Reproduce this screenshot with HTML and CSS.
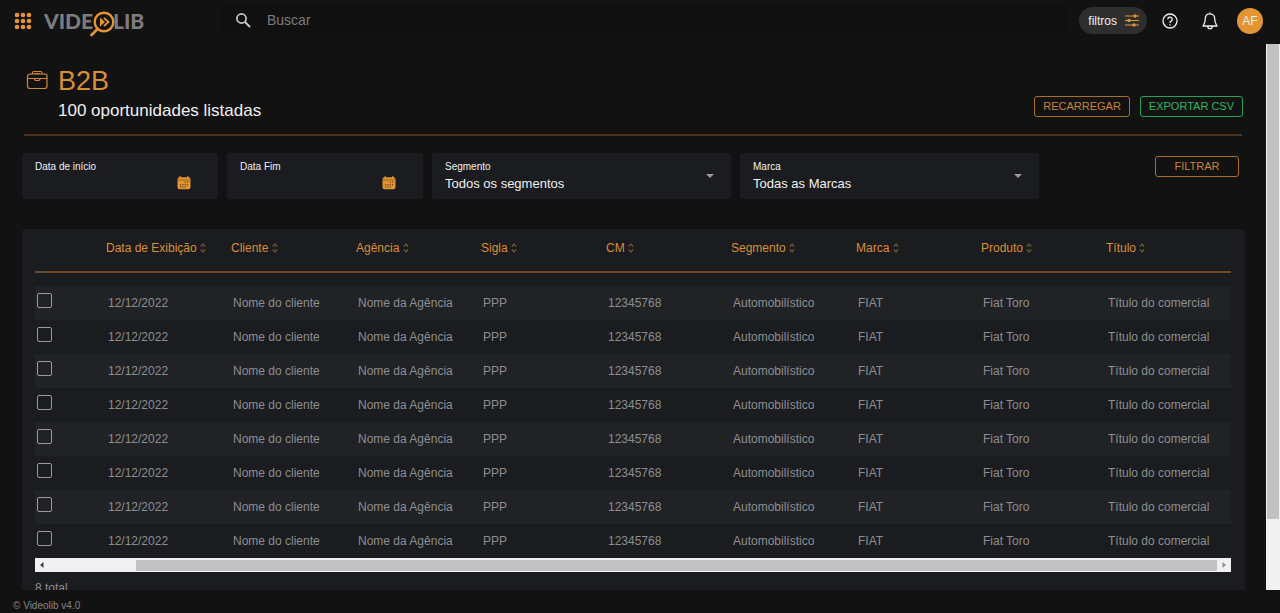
FILE: index.html
```html
<!DOCTYPE html>
<html lang="pt-BR">
<head>
<meta charset="utf-8">
<meta name="viewport" content="width=device-width, initial-scale=1">
<title>Videolib - B2B</title>
<link rel="stylesheet" href="styles.css">
</head>
<body>
<svg class="sprite" aria-hidden="true">
  <symbol id="sort" viewBox="0 0 6 10">
    <path d="M.8 3.500 3 1.200 5.200 3.500M.8 6.500 3 8.800 5.200 6.500" fill="none" stroke="currentColor" stroke-width="1.200"/>
  </symbol>
  <symbol id="calendar" viewBox="0 0 14 14">
    <path fill="#e29532" d="M2.500 1.200h9A2 2 0 0 1 13.500 3.200V11.200A2 2 0 0 1 11.500 13.200h-9A2 2 0 0 1 .5 11.200V3.200A2 2 0 0 1 2.500 1.200zM2.500 .3h1.500v2H2.500zM10 .3h1.500v2H10z"/>
    <path stroke="#8a5c22" stroke-width=".8" d="M.5 4h13"/>
    <path fill="#6b481c" d="M3 8h1.200v1.200H3zM3 10.200h1.200v1.200H3zM5.300 8h1.200v1.200H5.300zM5.300 10.200h1.200v1.200H5.300zM7.600 5.500h1.200v1.200H7.600zM7.600 8h1.200v1.200H7.600zM7.600 10.200h1.200v1.200H7.600zM9.900 5.500h1.200v1.200H9.900zM9.900 8h1.200v1.200H9.900z"/>
  </symbol>
</svg>

<header class="topbar">
  <button class="icon-btn apps" type="button" aria-label="Aplicativos">
    <svg width="18" height="18" viewBox="0 0 18 18" fill="#e29532">
      <circle cx="3" cy="3" r="2.300"/><circle cx="9" cy="3" r="2.300"/><circle cx="15" cy="3" r="2.300"/>
      <circle cx="3" cy="9" r="2.300"/><circle cx="9" cy="9" r="2.300"/><circle cx="15" cy="9" r="2.300"/>
      <circle cx="3" cy="15" r="2.300"/><circle cx="9" cy="15" r="2.300"/><circle cx="15" cy="15" r="2.300"/>
    </svg>
  </button>
  <a class="logo" href="#" aria-label="Videolib">
    <svg width="102" height="28" viewBox="0 0 102 28">
      <text class="logo-text" x="0" y="20">VIDE</text>
      <text class="logo-text" x="69" y="20">LIB</text>
      <circle cx="60" cy="13" r="9.300" fill="#121212" stroke="#e29532" stroke-width="2.400"/>
      <path d="M53.500 20 47.500 26" stroke="#e29532" stroke-width="2.800" stroke-linecap="round"/>
      <path d="M56 8.500 61 13 56 17.500z" fill="#e29532"/>
      <path d="M60 9 64.500 13 60 17" fill="none" stroke="#e29532" stroke-width="1.800"/>
    </svg>
  </a>
  <form class="search" role="search">
    <svg width="16" height="16" viewBox="0 0 16 16" fill="none" stroke="#c8c8c8" stroke-width="1.700" aria-hidden="true">
      <circle cx="6.500" cy="6.500" r="4.600"/><path d="M10 10 15 15" stroke-width="2"/>
    </svg>
    <input class="search-input" type="search" placeholder="Buscar" aria-label="Buscar">
  </form>
  <div class="actions">
    <button class="filters" type="button">filtros
      <svg width="14" height="13" viewBox="0 0 14 13" fill="none" stroke="#e29532" aria-hidden="true">
        <path d="M0 2h14M0 6.500h14M0 11h14" stroke-width="1.200"/>
        <g fill="#e29532" stroke="none"><circle cx="10" cy="2" r="1.700"/><circle cx="4" cy="6.500" r="1.700"/><circle cx="9" cy="11" r="1.700"/></g>
      </svg>
    </button>
    <button class="icon-btn" type="button" aria-label="Ajuda">
      <svg width="16" height="16" viewBox="0 0 16 16" fill="none" stroke="#f0f0f0" stroke-width="1.300">
        <circle cx="8" cy="8" r="7"/><path d="M5.800 6.300a2.200 2.200 0 1 1 3.400 1.800Q8 8.800 8 10M8 11.200v1.300"/>
      </svg>
    </button>
    <button class="icon-btn" type="button" aria-label="Notificações">
      <svg width="16" height="18" viewBox="0 0 16 18" fill="none" stroke="#f0f0f0" stroke-width="1.300" stroke-linejoin="round">
        <path d="M8 .500V2M8 1.800c-3 0-4.700 2.200-4.700 5 0 4.200-1 5.200-2.300 7.200h14c-1.300-2-2.300-3-2.300-7.200 0-2.800-1.700-5-4.700-5zM5.800 14.300a2.200 2.600 0 0 0 4.400 0"/>
      </svg>
    </button>
    <button class="avatar" type="button" aria-label="AF, conta">AF</button>
  </div>
</header>

<div class="viewport">
  <main class="content">
    <section class="heading">
      <svg class="heading-icon" width="22" height="20" viewBox="0 0 22 20" fill="none" stroke="#d08a35" stroke-width="1.200" aria-hidden="true">
        <rect x="1.500" y="4" width="19.500" height="14.500" rx="2.500"/>
        <path d="M6.500 4V2.800Q6.500 1.500 7.800 1.500h6.900q1.300 0 1.300 1.300V4M8.500 3.500h5.500M1.500 8.500h19.500M8.500 8.800q0 1.700 1.500 1.700h2.500q1.500 0 1.500-1.700"/>
      </svg>
      <div class="heading-text">
        <h1 class="title">B2B</h1>
        <p class="subtitle">100 oportunidades listadas</p>
      </div>
      <div class="heading-actions">
        <button class="btn" type="button">RECARREGAR</button>
        <button class="btn btn-green" type="button">EXPORTAR CSV</button>
      </div>
    </section>

    <form class="filter-bar">
      <div class="field field-date">
        <label class="field-label" for="start">Data de início</label>
        <div class="date-row">
          <input class="date-input" id="start" type="text">
          <button class="icon-btn" type="button" aria-label="Abrir calendário de início"><svg width="14" height="14"><use href="#calendar"/></svg></button>
        </div>
      </div>
      <div class="field field-date">
        <label class="field-label" for="end">Data Fim</label>
        <div class="date-row">
          <input class="date-input" id="end" type="text">
          <button class="icon-btn" type="button" aria-label="Abrir calendário de fim"><svg width="14" height="14"><use href="#calendar"/></svg></button>
        </div>
      </div>
      <div class="field field-select">
        <div class="select-col">
          <label class="field-label" for="segment">Segmento</label>
          <select class="select" id="segment"><option>Todos os segmentos</option></select>
        </div>
        <span class="caret"></span>
      </div>
      <div class="field field-select">
        <div class="select-col">
          <label class="field-label" for="brand">Marca</label>
          <select class="select" id="brand"><option>Todas as Marcas</option></select>
        </div>
        <span class="caret"></span>
      </div>
      <button class="btn btn-filter" type="button">FILTRAR</button>
    </form>

    <section class="panel">
      <table class="grid">
        <thead>
          <tr>
            <th class="check-col"></th>
            <th>Data de Exibição <svg class="sort"><use href="#sort"/></svg></th>
            <th>Cliente <svg class="sort"><use href="#sort"/></svg></th>
            <th>Agência <svg class="sort"><use href="#sort"/></svg></th>
            <th>Sigla <svg class="sort"><use href="#sort"/></svg></th>
            <th>CM <svg class="sort"><use href="#sort"/></svg></th>
            <th>Segmento <svg class="sort"><use href="#sort"/></svg></th>
            <th>Marca <svg class="sort"><use href="#sort"/></svg></th>
            <th>Produto <svg class="sort"><use href="#sort"/></svg></th>
            <th>Título <svg class="sort"><use href="#sort"/></svg></th>
          </tr>
        </thead>
        <tbody>
          <tr><td><input class="check" type="checkbox" aria-label="Selecionar linha 1"></td><td>12/12/2022</td><td>Nome do cliente</td><td>Nome da Agência</td><td>PPP</td><td>12345768</td><td>Automobilístico</td><td>FIAT</td><td>Fiat Toro</td><td>Título do comercial</td></tr>
          <tr><td><input class="check" type="checkbox" aria-label="Selecionar linha 2"></td><td>12/12/2022</td><td>Nome do cliente</td><td>Nome da Agência</td><td>PPP</td><td>12345768</td><td>Automobilístico</td><td>FIAT</td><td>Fiat Toro</td><td>Título do comercial</td></tr>
          <tr><td><input class="check" type="checkbox" aria-label="Selecionar linha 3"></td><td>12/12/2022</td><td>Nome do cliente</td><td>Nome da Agência</td><td>PPP</td><td>12345768</td><td>Automobilístico</td><td>FIAT</td><td>Fiat Toro</td><td>Título do comercial</td></tr>
          <tr><td><input class="check" type="checkbox" aria-label="Selecionar linha 4"></td><td>12/12/2022</td><td>Nome do cliente</td><td>Nome da Agência</td><td>PPP</td><td>12345768</td><td>Automobilístico</td><td>FIAT</td><td>Fiat Toro</td><td>Título do comercial</td></tr>
          <tr><td><input class="check" type="checkbox" aria-label="Selecionar linha 5"></td><td>12/12/2022</td><td>Nome do cliente</td><td>Nome da Agência</td><td>PPP</td><td>12345768</td><td>Automobilístico</td><td>FIAT</td><td>Fiat Toro</td><td>Título do comercial</td></tr>
          <tr><td><input class="check" type="checkbox" aria-label="Selecionar linha 6"></td><td>12/12/2022</td><td>Nome do cliente</td><td>Nome da Agência</td><td>PPP</td><td>12345768</td><td>Automobilístico</td><td>FIAT</td><td>Fiat Toro</td><td>Título do comercial</td></tr>
          <tr><td><input class="check" type="checkbox" aria-label="Selecionar linha 7"></td><td>12/12/2022</td><td>Nome do cliente</td><td>Nome da Agência</td><td>PPP</td><td>12345768</td><td>Automobilístico</td><td>FIAT</td><td>Fiat Toro</td><td>Título do comercial</td></tr>
          <tr><td><input class="check" type="checkbox" aria-label="Selecionar linha 8"></td><td>12/12/2022</td><td>Nome do cliente</td><td>Nome da Agência</td><td>PPP</td><td>12345768</td><td>Automobilístico</td><td>FIAT</td><td>Fiat Toro</td><td>Título do comercial</td></tr>
        </tbody>
      </table>
      <div class="hscroll" aria-hidden="true">
        <svg width="14" height="10" viewBox="0 0 14 10"><path d="M8.500 2v6L5 5z" fill="#404040"/></svg>
        <div class="hscroll-rest"></div>
        <div class="hscroll-thumb"></div>
        <svg width="14" height="10" viewBox="0 0 14 10"><path d="M5.500 2v6L9 5z" fill="#909090"/></svg>
      </div>
      <p class="total">8 total</p>
    </section>
  </main>
  <div class="vscroll" aria-hidden="true"><div class="vscroll-thumb"></div></div>
</div>

<footer class="footer">© Videolib v4.0</footer>
</body>
</html>
```

FILE: styles.css
```css
* { box-sizing: border-box; }

body {
  margin: 0;
  height: 100vh;
  display: flex;
  flex-direction: column;
  background: #121212;
  color: #f0f0f0;
  font-family: "Liberation Sans", Arial, sans-serif;
  font-size: 12px;
  overflow: hidden;
}

button, input, select { font-family: inherit; color: inherit; }
button { cursor: pointer; }
svg { display: block; flex: none; }

.sprite { position: absolute; width: 0; height: 0; }

.icon-btn {
  display: flex;
  padding: 0;
  border: 0;
  background: none;
}

/* Top bar */
.topbar {
  flex: none;
  display: flex;
  align-items: center;
  height: 44px;
  padding: 0 17px 3px 14px;
  box-shadow: 0 1px 2px #0e0e0e;
}

.logo { margin: 4px 0 0 12px; }

.logo-text {
  font-family: Lato, sans-serif;
  font-size: 21px;
  font-weight: 900;
  fill: #7c7c7c;
}

.search {
  flex: 1;
  display: flex;
  align-items: center;
  gap: 16px;
  height: 34px;
  margin: 0 10px 0 73px;
  padding: 0 0 1px 16px;
  background: #101010;
  border-radius: 3px;
}

.search-input {
  flex: 1;
  min-width: 0;
  padding: 0;
  border: 0;
  outline: 0;
  background: none;
  font-size: 14px;
}

.search-input::placeholder { color: #7c7c7c; }

.actions { display: flex; align-items: center; }
.actions .icon-btn { margin-left: 15px; }
.actions .icon-btn + .icon-btn { margin-left: 24px; }

.filters {
  display: flex;
  align-items: center;
  gap: 8px;
  height: 27px;
  padding: 0 8px 0 9px;
  border: 0;
  border-radius: 14px;
  background: #2e2e2e;
  font-size: 12px;
}

.avatar {
  width: 26px;
  height: 26px;
  margin-left: 19px;
  padding: 0;
  border: 0;
  border-radius: 50%;
  background: #e29532;
  font-size: 12px;
}

/* Scrolling page area */
.viewport { flex: 1; min-height: 0; display: flex; }

.content {
  flex: 1;
  min-width: 0;
  overflow: hidden;
  padding: 22px 21px 0 22px;
}

.vscroll { flex: none; width: 14px; padding: 0 1px; background: #f1f1f1; }
.vscroll-thumb { height: 87%; background: #c1c1c1; }

.heading {
  display: flex;
  align-items: flex-start;
  margin: 0 3px 0 2px;
  padding: 0 0 13px 2px;
  border-bottom: 2px solid #4a321c;
}

.heading-icon { margin-top: 4px; }
.heading-text { flex: 1; margin-left: 10px; }

.title {
  margin: 0;
  color: #d98f33;
  font-size: 27px;
  font-weight: 400;
  line-height: 30px;
}

.subtitle { margin: 5px 0 0; font-size: 17px; line-height: 20px; }

.heading-actions { display: flex; gap: 10px; margin: 30px -1px 0 0; }

.btn {
  height: 21px;
  padding: 0 8px;
  border: 1px solid #a86e2b;
  border-radius: 3px;
  background: none;
  color: #c98432;
  font-size: 11px;
  line-height: 19px;
}

.btn-green { border-color: #25a35a; color: #2bb866; }

/* Filters */
.filter-bar { display: flex; gap: 9px; padding-top: 17px; }

.field {
  display: flex;
  height: 46px;
  padding: 7px 13px;
  border-radius: 3px;
  background: #1b1c1f;
}

.field-date { flex: 0 1 196px; min-width: 0; flex-direction: column; }
.field-select { flex: 0 1 299px; min-width: 0; align-items: center; }
.field-label { display: block; font-size: 10px; line-height: 13px; }

.date-row { display: flex; padding-right: 14px; align-items: center; height: 20px; }
.date-input { flex: 1; min-width: 0; padding: 0; border: 0; outline: 0; background: none; }

.select-col { flex: 1; min-width: 0; }

.select {
  width: 100%;
  height: 20px;
  padding: 1px 0 0;
  border: 0;
  appearance: none;
  background: none;
  font-size: 13px;
}

.caret {
  border: 4px solid transparent;
  border-top-color: #9a9a9a;
  border-bottom: 0;
  margin-right: 4px;
}

.btn-filter { width: 84px; margin: 3px 6px 0 auto; }

/* Table panel */
.panel {
  margin-top: 30px;
  padding: 0 14px 20px 13px;
  border-radius: 4px;
  background: #1b1c1f;
}

.grid {
  width: 100%;
  table-layout: fixed;
  border-spacing: 0;
  color: #8d8e90;
}

.grid th {
  height: 44px;
  padding: 0 0 4px;
  border-bottom: 2px solid #6a4a28;
  color: #d98f33;
  font-weight: 400;
  text-align: left;
  white-space: nowrap;
}

.grid .check-col { width: 71px; }

.sort {
  display: inline-block;
  width: 6px;
  height: 10px;
  color: #7d5a30;
  vertical-align: -1px;
}

.grid tbody::before { content: ""; display: block; height: 13px; }
.grid td { height: 34px; padding: 0 2px; white-space: nowrap; }
.grid tbody tr:nth-child(odd) { background: #212226; }

.check {
  display: block;
  width: 15px;
  height: 15px;
  margin: 0 0 5px;
  appearance: none;
  border: 1px solid #9a9a9a;
  border-radius: 2px;
}

.check:checked { background: #d98f33; }

.hscroll {
  display: flex;
  align-items: center;
  height: 14px;
  background: #f1f1f1;
}

.hscroll-rest { flex: 87; }
.hscroll-thumb { flex: 1081; height: 11px; background: #c1c1c1; }

.total { margin: 9px 0 0; color: #8d8e90; line-height: 14px; }

.footer {
  flex: none;
  height: 23px;
  padding: 0 13px;
  color: #858585;
  font-size: 10px;
  line-height: 31px;
  background: #121212;
}
```
